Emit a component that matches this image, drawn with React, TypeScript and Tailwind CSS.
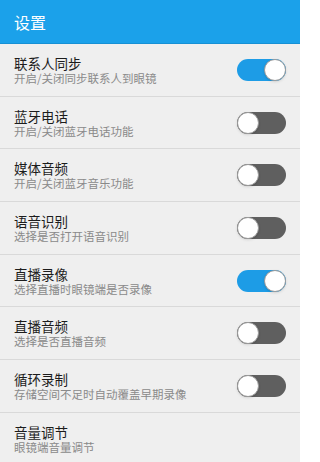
import { useState } from "react";

type Item = {
  title: string;
  desc: string;
  toggle?: boolean;
};

const items: Item[] = [
  { title: "联系人同步", desc: "开启/关闭同步联系人到眼镜", toggle: true },
  { title: "蓝牙电话", desc: "开启/关闭蓝牙电话功能", toggle: false },
  { title: "媒体音频", desc: "开启/关闭蓝牙音乐功能", toggle: false },
  { title: "语音识别", desc: "选择是否打开语音识别", toggle: false },
  { title: "直播录像", desc: "选择直播时眼镜端是否录像", toggle: true },
  { title: "直播音频", desc: "选择是否直播音频", toggle: false },
  { title: "循环录制", desc: "存储空间不足时自动覆盖早期录像", toggle: false },
  { title: "音量调节", desc: "眼镜端音量调节" },
];

function Switch({ on, onClick }: { on: boolean; onClick: () => void }) {
  return (
    <button
      onClick={onClick}
      className={`relative w-[49px] h-[22px] rounded-full flex items-center ${
        on ? "bg-[#1d9ce6] justify-end" : "bg-[#5f5f5f] justify-start"
      }`}
    >
      <span className="w-[22px] h-[22px] rounded-full bg-white border border-[#9a9a9a] shadow-sm" />
    </button>
  );
}

export default function App() {
  const [state, setState] = useState<boolean[]>(items.map((i) => !!i.toggle));

  return (
    <div
      className="w-[300px] h-[462px] bg-[#efefef] overflow-hidden flex flex-col"
      style={{ fontFamily: '"Noto Sans CJK SC", "Noto Sans", sans-serif' }}
    >
      <div className="h-[44px] shrink-0 bg-[#1ba1ea] flex items-center px-[14px] border-b border-[#1690d4]">
        <span className="text-white text-[16px] leading-none">设置</span>
      </div>
      {items.map((item, idx) => (
        <div
          key={item.title}
          className="h-[52.7px] shrink-0 border-b border-[#d9d9d9] flex items-center justify-between pl-[14px] pr-[14px]"
        >
          <div className="flex flex-col">
            <span className="text-[13.5px] leading-[16px] text-[#1c1c1c]">{item.title}</span>
            <span className="text-[11.5px] leading-[14px] text-[#8a8a8a]">{item.desc}</span>
          </div>
          {item.toggle !== undefined && (
            <Switch
              on={state[idx]}
              onClick={() => setState((s) => s.map((v, i) => (i === idx ? !v : v)))}
            />
          )}
        </div>
      ))}
    </div>
  );
}
